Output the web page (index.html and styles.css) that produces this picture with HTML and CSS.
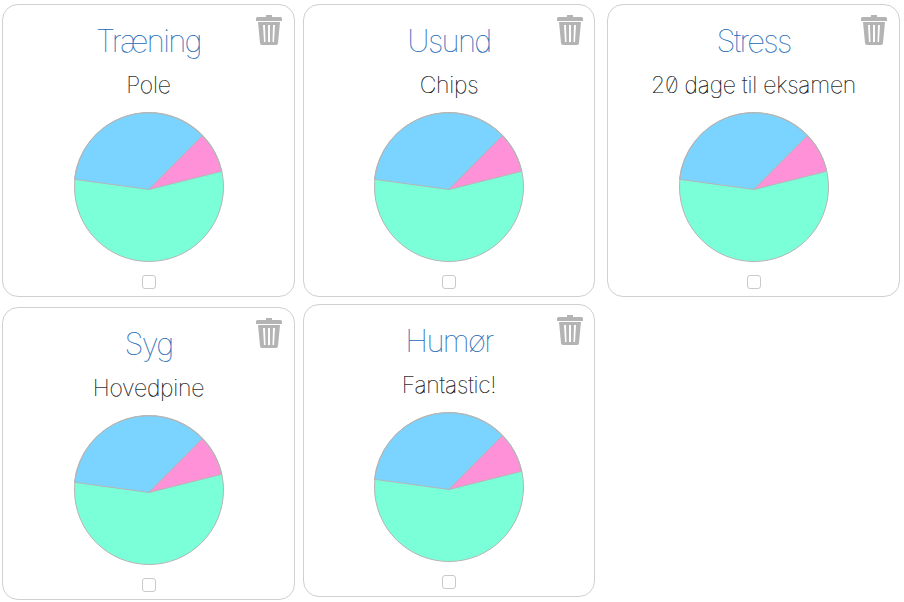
FILE: index.html
```html
<!DOCTYPE html>
<html>
<head>
	<meta charset="utf-8">
	<title>Dagbog</title>
	<link rel="stylesheet" href="styles.css">
</head>
<body>
	<svg class="defs" width="0" height="0">
		<defs>
			<symbol id="trash" viewBox="0 0 26 31">
				<path d="M10 3V1h6V3h8.500a1.500 1.500 0 0 1 1.500 1.500V7H0V4.500A1.500 1.500 0 0 1 1.500 3z"/>
				<path fill-rule="evenodd" d="M2 8h22l-2 21a2 2 0 0 1-2 2H6a2 2 0 0 1-2-2zM7 11l1 17h1.500L9 11zM12 11v17h2V11zM17 11l-.5 17H18l1-17z"/>
			</symbol>
			<symbol id="pie" viewBox="0 0 150 150">
				<circle cx="75" cy="75" r="74.500" fill="#7affd9"/>
				<path fill="#7ad4ff" stroke="#b5b5b5" d="M75 77.500L128.300 23.700A74.500 74.500 0 0 0 .4 67.300z"/>
				<path fill="#ff91d9" stroke="#b5b5b5" d="M75 77.500L147.700 59.300A74.500 74.500 0 0 0 128.300 23.700z"/>
				<circle cx="75" cy="75" r="74.500" fill="none" stroke="#b5b5b5"/>
			</symbol>
		</defs>
	</svg>

	<div class="row">
		<div class="card">
			<svg class="trash"><use href="#trash"/></svg>
			<h2>Træning</h2>
			<p>Pole</p>
			<svg class="pie"><use href="#pie"/></svg>
			<input type="checkbox" class="check">
		</div>
		<div class="card card-second">
			<svg class="trash"><use href="#trash"/></svg>
			<h2>Usund</h2>
			<p>Chips</p>
			<svg class="pie"><use href="#pie"/></svg>
			<input type="checkbox" class="check">
		</div>
		<div class="card card-third">
			<svg class="trash"><use href="#trash"/></svg>
			<h2>Stress</h2>
			<p>20 dage til eksamen</p>
			<svg class="pie"><use href="#pie"/></svg>
			<input type="checkbox" class="check">
		</div>
	</div>
	<div class="row">
		<div class="card card-low">
			<svg class="trash"><use href="#trash"/></svg>
			<h2>Syg</h2>
			<p>Hovedpine</p>
			<svg class="pie"><use href="#pie"/></svg>
			<input type="checkbox" class="check">
		</div>
		<div class="card card-second">
			<svg class="trash"><use href="#trash"/></svg>
			<h2>Humør</h2>
			<p>Fantastic!</p>
			<svg class="pie"><use href="#pie"/></svg>
			<input type="checkbox" class="check">
		</div>
	</div>
</body>
</html>
```

FILE: styles.css
```css
body {
  margin: 0;
  padding: 4px 0 0 2px;
  background: #fff;
  font-family: "Inter", "Liberation Sans", sans-serif;
  font-weight: 100;
  font-feature-settings: "zero";
}

.defs {
  display: block;
  height: 0;
}

.row {
  display: flex;
  align-items: flex-start;
  margin-bottom: 7px;
}

.card {
  position: relative;
  box-sizing: border-box;
  width: 293px;
  height: 293px;
  border: 1px solid #d0d0d0;
  border-radius: 16px;
  text-align: center;
  padding-top: 17px;
}

.card-second {
  width: 292px;
  margin-left: 8px;
}

.card-third {
  margin-left: 12px;
}

.card-low {
  margin-top: 3px;
}

h2 {
  margin: 0;
  font-size: 31px;
  line-height: 38px;
  font-weight: 100;
  letter-spacing: -1.7px;
  color: #1a68b8;
  -webkit-text-stroke: 0.15px #1a68b8;
}

p {
  margin: 9px 0 0;
  font-size: 23px;
  line-height: 32px;
  letter-spacing: -0.2px;
  color: #000;
  -webkit-text-stroke: 0.2px #000;
}

.pie {
  display: block;
  width: 150px;
  height: 150px;
  margin: 11px auto 0;
}

.trash {
  position: absolute;
  top: 9px;
  right: 12px;
  width: 26px;
  height: 31px;
  fill: #b4b4b4;
  filter: blur(0.5px);
}

.card-second .trash {
  right: 11px;
}

.check {
  appearance: none;
  display: block;
  box-sizing: border-box;
  width: 14px;
  height: 14px;
  margin: 13px auto 0;
  border: 1px solid #cacaca;
  border-radius: 3px;
  background: #fff;
}
```
